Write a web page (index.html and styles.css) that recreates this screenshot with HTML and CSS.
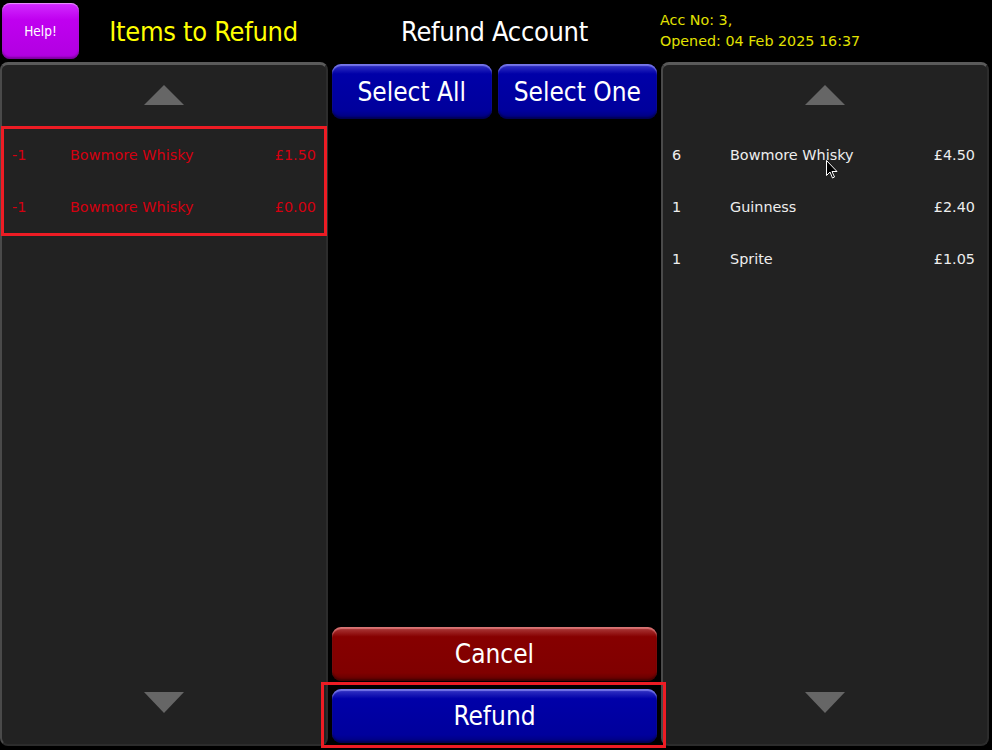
FILE: index.html
```html
<!DOCTYPE html>
<html lang="en">
<head>
  <meta charset="UTF-8" />
  <title>Refund Account</title>
  <link rel="stylesheet" href="styles.css">
</head>
<body>

  <!-- Header -->
  <div class="header">
    <div class="header-left">
      <button class="help-btn">Help!</button>
      <div class="title yellow">Items to Refund</div>
    </div>
    <div class="title">Refund Account</div>
    <div class="acc-info">
      <div>Acc No: 3,</div>
      <div>Opened: 04 Feb 2025 16:37</div>
    </div>
  </div>

  <div class="main">

    <!-- Items to refund -->
    <div class="panel">
      <div class="arrow-zone top"><div class="arrow-up"></div></div>
      <div class="list">
        <div class="selected-box">
          <div class="row refund-row">
            <span class="qty">-1</span><span class="name">Bowmore Whisky</span><span class="price">£1.50</span>
          </div>
          <div class="row refund-row">
            <span class="qty">-1</span><span class="name">Bowmore Whisky</span><span class="price">£0.00</span>
          </div>
        </div>
      </div>
      <div class="arrow-zone bottom"><div class="arrow-down"></div></div>
    </div>

    <!-- Actions -->
    <div class="actions">
      <div class="select-row">
        <button class="btn blue">Select All</button>
        <button class="btn blue">Select One</button>
      </div>
      <div class="bottom-btns">
        <button class="btn red">Cancel</button>
        <div class="refund-box">
          <button class="btn blue">Refund</button>
        </div>
      </div>
    </div>

    <!-- Account items -->
    <div class="panel">
      <div class="arrow-zone top"><div class="arrow-up"></div></div>
      <div class="list">
        <div class="row">
          <span class="qty">6</span><span class="name">Bowmore Whisky</span><span class="price">£4.50</span>
        </div>
        <div class="row">
          <span class="qty">1</span><span class="name">Guinness</span><span class="price">£2.40</span>
        </div>
        <div class="row">
          <span class="qty">1</span><span class="name">Sprite</span><span class="price">£1.05</span>
        </div>
      </div>
      <div class="arrow-zone bottom"><div class="arrow-down"></div></div>
    </div>

  </div>

  <svg class="cursor" width="12" height="19" viewBox="0 0 12 19">
    <path d="M0.5 0.5 L0.5 15.5 L4 12 L6.5 18 L8.5 17 L6 11.5 L11 11.5 Z" fill="#000" stroke="#fff" stroke-width="1"/>
  </svg>

</body>
</html>
```

FILE: styles.css
```css
body {
  margin: 0;
  padding: 0;
  background: #000;
  font-family: "DejaVu Sans", Tahoma, sans-serif;
  color: white;
  width: 992px;
  height: 750px;
  overflow: hidden;
  position: relative;
}

button {
  font-family: inherit;
  cursor: pointer;
}

.header {
  display: grid;
  grid-template-columns: 328px 325px 328px;
  column-gap: 4px;
  height: 62px;
  align-items: center;
}

.header-left {
  display: flex;
  align-items: center;
  height: 100%;
}

.help-btn {
  width: 77px;
  height: 56px;
  margin-left: 2px;
  border: none;
  border-radius: 8px;
  background: linear-gradient(#d22cff, #c000f0 30%, #b000e0);
  box-shadow: inset 0 1px 1px rgba(255, 255, 255, 0.5), inset 0 -2px 2px rgba(0, 0, 0, 0.3);
  color: white;
  font-size: 13.5px;
  font-stretch: condensed;
  padding: 0;
}

.title {
  flex: 1;
  text-align: center;
  font-size: 27px;
  font-stretch: condensed;
  letter-spacing: -0.3px;
}

.yellow {
  color: #ffff00;
}

.acc-info {
  color: #e2e200;
  font-size: 14.3px;
  line-height: 21px;
  margin-left: -1px;
}

.main {
  display: grid;
  grid-template-columns: 328px 325px 328px;
  column-gap: 4px;
  height: 688px;
}

.panel {
  display: flex;
  flex-direction: column;
  height: 684px;
  background: #222;
  border-radius: 8px;
  border-top: 3px solid #5a5a5a;
  border-left: 2px solid #4a4a4a;
  border-right: 2px solid #2c2c2c;
  border-bottom: 2px solid #2c2c2c;
  box-sizing: border-box;
}

.arrow-zone {
  display: flex;
  justify-content: center;
}

.arrow-zone.top {
  height: 61px;
  padding-top: 20px;
  box-sizing: border-box;
}

.arrow-zone.bottom {
  height: 52px;
  box-sizing: border-box;
}

.arrow-up {
  width: 0;
  height: 0;
  border-left: 20px solid transparent;
  border-right: 20px solid transparent;
  border-bottom: 20px solid #666;
}

.arrow-down {
  width: 0;
  height: 0;
  border-left: 20px solid transparent;
  border-right: 20px solid transparent;
  border-top: 21px solid #666;
}

.list {
  flex: 1;
}

.selected-box {
  border: 3px solid #ed1c24;
  margin-left: -1px;
  margin-right: -1px;
}

.row {
  display: flex;
  align-items: center;
  height: 52px;
  padding: 0 12px 0 9px;
  font-size: 14.4px;
  color: #eee;
}

.refund-row {
  padding: 0 8px 0 8px;
  color: #d40010;
}

.list > .row:first-child {
  margin-top: 3px;
}

.qty {
  width: 58px;
}

.name {
  flex: 1;
}

.actions {
  display: flex;
  flex-direction: column;
  justify-content: space-between;
  padding-top: 2px;
  height: 684px;
}

.select-row {
  display: flex;
  gap: 6px;
}

.select-row .btn {
  flex: 1;
  height: 55px;
}

.btn {
  border: none;
  border-radius: 9px;
  color: white;
  font-size: 26px;
  font-stretch: condensed;
  padding: 0;
  height: 54px;
  width: 100%;
}

.blue {
  background: linear-gradient(#3a3ac8, #0000a8 18%, #00009c 85%, #00007a);
  box-shadow: inset 0 2px 1px rgba(160, 160, 255, 0.6), inset 0 -2px 2px rgba(0, 0, 40, 0.5);
}

.red {
  background: linear-gradient(#b04040, #860000 18%, #800000 85%, #600000);
  box-shadow: inset 0 2px 1px rgba(255, 170, 170, 0.5), inset 0 -2px 2px rgba(40, 0, 0, 0.5);
}

.bottom-btns {
  display: flex;
  flex-direction: column;
}

.refund-box {
  border: 3px solid #ed1c24;
  margin: 1px -9px 0 -11px;
  padding: 4px 6px 2px 8px;
  position: relative;
}

.cursor {
  position: absolute;
  left: 826px;
  top: 160px;
}
```
